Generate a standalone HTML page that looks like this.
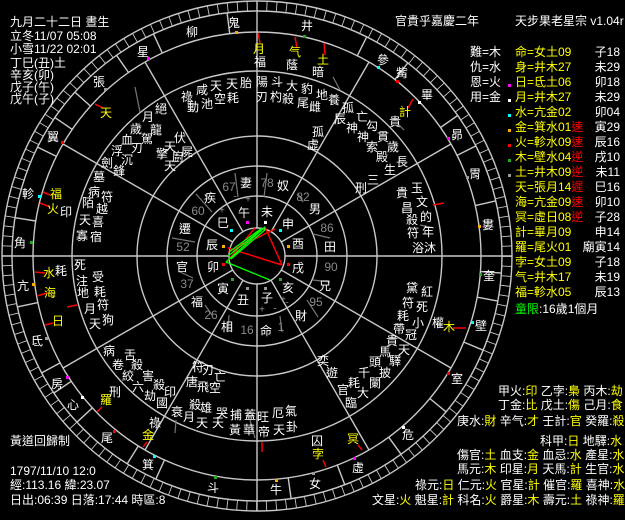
<!DOCTYPE html>
<html><head><meta charset="utf-8"><style>
html,body{margin:0;padding:0;background:#000;}
svg{display:block;font-family:"Liberation Sans","Noto Sans CJK TC","WenQuanYi Zen Hei",sans-serif;}
.c text{text-anchor:middle;dominant-baseline:central;font-size:12px;fill:#fff}
.c text.y{fill:#ff0}
.c text.g{fill:#8a8a8a;font-size:12px}
.t{font-size:12px;fill:#fff}
.y{fill:#ff0}.r{fill:#f00}.gr{fill:#0f0}
</style></head><body>
<svg width="625" height="520" viewBox="0 0 625 520" xmlns="http://www.w3.org/2000/svg">
<rect width="625" height="520" fill="#000"/>
<g fill="none" stroke="#c8c8c8" stroke-width="1.4">
<circle cx="257" cy="256" r="28"/><circle cx="257" cy="256" r="60"/><circle cx="257" cy="256" r="90"/>
<circle cx="257" cy="256" r="120"/><circle cx="257" cy="256" r="185"/><circle cx="257" cy="256" r="224"/>
<circle cx="257" cy="256" r="245"/><circle cx="257" cy="256" r="255"/>
<circle cx="257" cy="256" r="250" stroke-width="10" pathLength="160" stroke-dasharray="0.09 0.91"/>
<path d="M2 256H229M285 256H512M257 1V228M257 284V511
M281.2 242L451 144M271 231.8L369 62M243 231.8L145 62M232.8 242L63 144M232.8 270L63 368M243 280.2L145 450M271 280.2L369 450M281.2 270L451 368
M229.7 33.7L227.1 12.8M162.3 53L153.5 33.9M128.5 72.5L116.5 55.3M90.5 106.1L74.9 92.1M72.2 129.4L54.9 117.6M56.4 156.4L37.6 147.1M35.8 221L15 217.7M37.9 302.6L17.4 306.9M60.1 362.9L41.7 372.9M71.3 381.3L53.9 393M92.4 407.9L76.9 422.2M138.3 446L127.2 463.8M164.5 460L155.8 479.1M288.2 477.8L291.1 498.6M337.3 465.1L344.8 484.7M388.7 437.2L401 454.2M429.8 398.5L446 411.8M463.8 342.1L483.2 350.2M477.2 297.2L497.8 301.1M480.5 271.6L501.4 273.1M475.3 205.6L495.7 200.9M457.1 155.4L475.9 145.9M440.5 127.5L457.7 115.5M394.9 79.5L407.8 62.9M357.3 55.7L366.7 36.9"/>
</g>
<g stroke="#777" stroke-width="1.2">
<path d="M235 173L238 197M196 194L212 212M172 238L195 242M267 173L264 197M298 194L303 202M313 234L330 238M313 280L330 282M307 300L318 317M280 316L282 332M229 315L228 330M205 305L212 315M180 272L193 278M135 87L140 112M333 77L340 90M398 124L404 130M420 225L434 228M250 420L255 438M176 420L175 433"/>
</g>
<g stroke="#f00" stroke-width="1.5">
<path d="M95 104L103 108M43 192L50 195M40 203L50 207M295 37L297 48M324 43L325 55M258 33L260 43M413 99L408 108M433 205L444 203M453 328L466 328M358 445L362 450M323 460L326 467M262 442L262 452M35 272L45 273M37 296L47 293M45 325L53 323M67 307L77 305M97 412L102 407M143 447L147 442
M265 227L282 265M282 265L228 248M255 228L226 263M275 229L228 252"/>
</g>
<g stroke="#0f0" stroke-width="1.3">
<path d="M265 227L226 262M265 227L228 256M262 228L229 252M266 229L231 259M226 262L270 280"/>
</g>
<g>
<rect x="235" y="31" width="3" height="3" fill="#fa0"/><rect x="147" y="57" width="3" height="3" fill="#f0f"/><rect x="104" y="88" width="3" height="3" fill="#999"/><rect x="61" y="141" width="3" height="3" fill="#f00"/><rect x="38" y="195" width="3" height="3" fill="#0ff"/><rect x="30" y="241" width="3" height="3" fill="#2a2"/>
<rect x="303" y="35" width="3" height="3" fill="#2a2"/><rect x="377" y="66" width="3" height="3" fill="#0ff"/><rect x="396" y="80" width="3" height="3" fill="#f00"/><rect x="418" y="101" width="3" height="3" fill="#fff"/><rect x="447" y="137" width="3" height="3" fill="#f0f"/><rect x="466" y="176" width="3" height="3" fill="#999"/><rect x="478" y="225" width="3" height="3" fill="#fa0"/>
<rect x="479" y="273" width="3" height="3" fill="#2a2"/><rect x="471" y="321" width="3" height="3" fill="#0ff"/><rect x="447" y="372" width="3" height="3" fill="#f00"/><rect x="402" y="426" width="3" height="3" fill="#fff"/><rect x="353" y="457" width="3" height="3" fill="#f0f"/><rect x="312" y="472" width="3" height="3" fill="#999"/><rect x="275" y="479" width="3" height="3" fill="#fa0"/>
<rect x="32" y="283" width="3" height="3" fill="#fa0"/><rect x="45" y="337" width="3" height="3" fill="#999"/><rect x="66" y="376" width="3" height="3" fill="#f0f"/><rect x="81" y="396" width="3" height="3" fill="#fff"/><rect x="113" y="430" width="3" height="3" fill="#f00"/><rect x="153" y="455" width="3" height="3" fill="#0ff"/><rect x="214" y="476" width="3" height="3" fill="#2a2"/>
<rect x="264" y="221" width="3" height="3" fill="#fff"/><rect x="279" y="229" width="3" height="3" fill="#0ff"/><rect x="287" y="245" width="3" height="3" fill="#fa0"/><rect x="287" y="263" width="3" height="3" fill="#f00"/><rect x="279" y="278" width="3" height="3" fill="#2a2"/><rect x="264" y="287" width="3" height="3" fill="#999"/><rect x="246" y="287" width="3" height="3" fill="#999"/><rect x="231" y="278" width="3" height="3" fill="#2a2"/><rect x="222" y="263" width="3" height="3" fill="#f00"/><rect x="222" y="245" width="3" height="3" fill="#fa0"/><rect x="230" y="229" width="3" height="3" fill="#0ff"/><rect x="246" y="221" width="3" height="3" fill="#f0f"/>
</g>
<g class="c">
<!-- mansions -->
<text x="192" y="32">柳</text><text x="234" y="23">鬼</text><text x="143" y="52">星</text><text x="99" y="82">張</text><text x="53" y="137">翼</text><text x="28" y="194">軫</text><text x="20" y="243">角</text>
<text x="307" y="26">井</text><text x="383" y="60">參</text><text x="402" y="73">觜</text><text x="427" y="95">畢</text><text x="457" y="135">昴</text><text x="475" y="174">胃</text><text x="488" y="225">婁</text>
<text x="489" y="276">奎</text><text x="481" y="326">壁</text><text x="457" y="379">室</text><text x="408" y="435">危</text><text x="358" y="468">虛</text><text x="315" y="484">女</text><text x="276" y="490">牛</text>
<text x="23" y="286">亢</text><text x="37" y="341">氐</text><text x="57" y="384">房</text><text x="73" y="405">心</text><text x="107" y="438">尾</text><text x="148" y="465">箕</text><text x="213" y="488">斗</text>
<!-- planets -->
<text class="y" x="106" y="113">天</text><text class="y" x="56" y="194">福</text><text class="y" x="53" y="209">火</text><text x="66" y="212">印</text>
<text class="y" x="259" y="49">月</text><text x="260" y="62">福</text><text class="y" x="295" y="52">气</text><text class="y" x="323" y="60">土</text><text class="y" x="405" y="112">計</text>
<text x="438" y="323">權</text><text class="y" x="449" y="327">木</text><text class="y" x="353" y="439">冥</text><text x="317" y="441">囚</text><text class="y" x="318" y="454">孛</text>
<text class="y" x="49" y="273">水</text><text x="61" y="271">耗</text><text class="y" x="50" y="293">海</text><text class="y" x="58" y="321">日</text><text class="y" x="106" y="400">羅</text><text class="y" x="148" y="435">金</text>
<!-- stars top-left -->
<text x="161" y="109">絕</text><text x="148" y="117">月</text><text x="136" y="129">歲</text><text x="156" y="130">龍</text><text x="147" y="139">駕</text>
<text x="127" y="140">血</text><text x="137" y="148">刃</text><text x="117" y="151">浮</text><text x="127" y="160">沉</text><text x="107" y="163">劍</text><text x="119" y="171">鋒</text>
<text x="180" y="138">伏</text><text x="170" y="147">天</text><text x="187" y="152">屍</text><text x="162" y="154">擎</text><text x="178" y="157">廚</text><text x="170" y="166">天</text>
<text x="187" y="97">祿</text><text x="193" y="107">動</text><text x="202" y="90">咸</text><text x="207" y="104">池</text><text x="216" y="86">天</text><text x="220" y="99">空</text><text x="232" y="84">天</text><text x="233" y="98">耗</text><text x="246" y="83">胎</text>
<text x="99" y="177">墓</text><text x="94" y="192">病</text><text x="107" y="197">符</text><text x="88" y="203">陌</text><text x="102" y="209">越</text><text x="85" y="220">天</text><text x="98" y="222">喜</text><text x="82" y="236">寡</text><text x="96" y="237">宿</text>
<!-- stars top-right -->
<text x="292" y="65">蔭</text><text x="318" y="72">暗</text>
<text x="262" y="82">陽</text><text x="262" y="97">刃</text><text x="277" y="82">斗</text><text x="276" y="97">杓</text><text x="292" y="86">大</text><text x="288" y="99">殺</text><text x="307" y="89">豹</text><text x="303" y="103">尾</text><text x="322" y="95">地</text><text x="315" y="107">雌</text><text x="334" y="100">養</text>
<text x="348" y="108">孤</text><text x="340" y="119">辰</text><text x="362" y="117">亡</text><text x="352" y="128">神</text><text x="372" y="126">勾</text><text x="363" y="137">神</text><text x="383" y="137">貫</text><text x="372" y="147">索</text><text x="393" y="147">歲</text><text x="382" y="157">殿</text><text x="402" y="162">長</text><text x="390" y="170">生</text><text x="395" y="122">貴</text>
<text x="318" y="132">孤</text><text x="313" y="145">虛</text><text x="373" y="180">三</text><text x="361" y="188">刑</text>
<text x="402" y="193">貴</text><text x="417" y="188">玉</text><text x="407" y="208">昌</text><text x="422" y="202">文</text><text x="412" y="220">殺</text><text x="426" y="217">的</text><text x="413" y="233">符</text><text x="428" y="232">年</text><text x="418" y="248">浴</text><text x="430" y="248">沐</text>
<!-- stars bottom-right -->
<text x="412" y="288">黛</text><text x="427" y="292">紅</text><text x="408" y="303">符</text><text x="422" y="307">死</text><text x="403" y="316">耗</text><text x="418" y="323">小</text><text x="399" y="329">帶</text><text x="411" y="335">冠</text><text x="392" y="341">貴</text><text x="404" y="350">天</text><text x="385" y="352">馬</text><text x="395" y="361">驛</text><text x="375" y="362">頭</text><text x="385" y="373">披</text><text x="364" y="373">千</text><text x="375" y="383">闌</text><text x="354" y="383">耗</text><text x="363" y="393">大</text><text x="343" y="390">官</text><text x="351" y="403">臨</text><text x="323" y="361">奕</text><text x="332" y="373">遊</text>
<text x="263" y="417">旺</text><text x="264" y="432">帝</text><text x="278" y="413">厄</text><text x="279" y="430">天</text><text x="291" y="411">氣</text><text x="292" y="427">卦</text>
<!-- stars bottom-left -->
<text x="80" y="265">死</text><text x="82" y="281">注</text><text x="98" y="277">受</text><text x="83" y="293">地</text><text x="100" y="292">耗</text><text x="90" y="309">月</text><text x="103" y="305">符</text><text x="95" y="324">天</text><text x="108" y="320">狗</text>
<text x="109" y="351">病</text><text x="118" y="365">卷</text><text x="130" y="355">舌</text><text x="128" y="376">絞</text><text x="137" y="365">殺</text><text x="148" y="376">害</text><text x="138" y="387">六</text><text x="159" y="385">殺</text><text x="115" y="392">刑</text><text x="150" y="396">劫</text><text x="170" y="392">印</text><text x="162" y="403">國</text><text x="155" y="423">祿</text>
<text x="177" y="412">衰</text><text x="189" y="417">月</text><text x="195" y="405">殺</text><text x="202" y="423">天</text><text x="206" y="408">雄</text><text x="218" y="423">天</text><text x="222" y="413">哭</text><text x="235" y="430">黃</text><text x="236" y="415">捕</text><text x="249" y="430">華</text><text x="250" y="415">蓋</text>
<text x="198" y="367">符</text><text x="192" y="382">唐</text><text x="220" y="377">亡</text><text x="208" y="370">刃</text><text x="203" y="387">飛</text><text x="215" y="388">空</text>
<!-- inner palaces -->
<text x="246" y="183">妻</text><text class="g" x="229" y="187">67</text><text x="210" y="198">疾</text><text class="g" x="198" y="211">60</text><text x="244" y="213">午</text><text x="185" y="229">遷</text><text x="223" y="223">巳</text><text class="g" x="183" y="247">52</text><text x="212" y="245">辰</text>
<text class="g" x="267" y="183">78</text><text x="283" y="186">奴</text><text class="g" x="303" y="197">82</text><text x="315" y="209">男</text><text class="g" x="327" y="228">86</text><text x="330" y="247">田</text><text x="267" y="212">未</text><text x="288" y="224">申</text><text x="298" y="244">酉</text>
<text x="298" y="268">戌</text><text class="g" x="331" y="267">90</text><text x="325" y="286">兄</text><text x="288" y="288">亥</text><text x="267" y="298">子</text><text class="g" x="316" y="302">95</text><text x="301" y="316">財</text><text x="266" y="331">命</text><text class="g" x="281" y="327">1</text>
<text x="182" y="267">官</text><text x="213" y="267">卯</text><text class="g" x="187" y="284">37</text><text x="223" y="289">寅</text><text x="197" y="302">福</text><text class="g" x="211" y="315">26</text><text x="243" y="300">丑</text><text x="227" y="327">相</text><text class="g" x="247" y="330">16</text>
<text class="g" x="235" y="197" style="font-size:10px">-</text><text class="g" x="248" y="200" style="font-size:10px">+</text><text class="g" x="222" y="211" style="font-size:10px">+</text><text class="g" x="203" y="282" style="font-size:10px">-</text><text class="g" x="247" y="305" style="font-size:10px">-</text><text class="g" x="262" y="310" style="font-size:10px">+</text><text class="g" x="275" y="309" style="font-size:10px">-</text><text class="g" x="283" y="300" style="font-size:10px">+</text><text class="g" x="287" y="303" style="font-size:10px">-</text>
</g>
<!-- header left -->
<g class="t">
<text x="10" y="26">九月二十二日 晝生</text>
<text x="10" y="40">立冬11/07 05:08</text>
<text x="10" y="53">小雪11/22 02:01</text>
<text x="10" y="67">丁巳(丑)土</text>
<text x="10" y="79">辛亥(卯)</text>
<text x="10" y="91">戊子(午)</text>
<text x="10" y="103">戊午(子)</text>
<text x="395" y="25">官貴乎嘉慶二年</text>
<text x="515" y="25">天步果老星宗 v1.04r</text>
<text x="470" y="56">難=木</text><text x="470" y="71">仇=水</text><text x="470" y="86">恩=火</text><text x="470" y="101">用=金</text>
</g>
<g class="t">
<g class="y">
<text x="515" y="56">命=女土09</text><text x="515" y="71">身=井木27</text><text x="515" y="86">日=氐土06</text><text x="515" y="101">月=井木27</text><text x="515" y="116">水=亢金02</text>
<text x="515" y="131">金=箕水01<tspan class="r">速</tspan></text><text x="515" y="146">火=軫水09<tspan class="r">速</tspan></text><text x="515" y="161">木=壁水04<tspan class="r">逆</tspan></text><text x="515" y="176">土=井木09<tspan class="r">逆</tspan></text><text x="515" y="191">天=張月14<tspan class="r">遲</tspan></text><text x="515" y="206">海=亢金09<tspan class="r">速</tspan></text><text x="515" y="221">冥=虛日08<tspan class="r">逆</tspan></text>
<text x="515" y="236">計=畢月09</text><text x="515" y="251">羅=尾火01</text><text x="515" y="266">孛=女土09</text><text x="515" y="281">气=井木17</text><text x="515" y="296">福=軫水05</text>
</g>
<g text-anchor="end">
<text x="620" y="56">子18</text><text x="620" y="71">未29</text><text x="620" y="86">卯18</text><text x="620" y="101">未29</text><text x="620" y="116">卯04</text><text x="620" y="131">寅29</text><text x="620" y="146">辰16</text><text x="620" y="161">戌10</text><text x="620" y="176">未11</text><text x="620" y="191">巳16</text><text x="620" y="206">卯10</text><text x="620" y="221">子28</text><text x="620" y="236">申14</text><text x="620" y="251">廟寅14</text><text x="620" y="266">子18</text><text x="620" y="281">未19</text><text x="620" y="296">辰13</text>
</g>
<text x="515" y="313"><tspan class="gr">童限</tspan>:16歲1個月</text>
<rect x="508" y="84" width="3" height="3" fill="#f0f"/><rect x="508" y="99" width="3" height="3" fill="#fff"/><rect x="508" y="114" width="3" height="3" fill="#0ff"/><rect x="508" y="129" width="3" height="3" fill="#fa0"/><rect x="508" y="144" width="3" height="3" fill="#f00"/><rect x="508" y="159" width="3" height="3" fill="#2a2"/><rect x="508" y="174" width="3" height="3" fill="#999"/>
<!-- bottom right -->
<text x="498" y="395">甲火:<tspan class="y">印</tspan> 乙孛:<tspan class="y">梟</tspan> 丙木:<tspan class="y">劫</tspan></text>
<text x="498" y="409">丁金:<tspan class="y">比</tspan> 戊土:<tspan class="y">傷</tspan> 己月:<tspan class="y">食</tspan></text>
<text x="457" y="425">庚水:<tspan class="y">財</tspan> 辛气:<tspan class="y">才</tspan> 壬計:<tspan class="y">官</tspan> 癸羅:<tspan class="y">殺</tspan></text>
<text x="540" y="445">科甲:<tspan class="y">日</tspan> 地驛:<tspan class="y">水</tspan></text>
<text x="457" y="459">傷官:<tspan class="y">土</tspan> 血支:<tspan class="y">金</tspan> 血忌:<tspan class="y">水</tspan> 產星:<tspan class="y">水</tspan></text>
<text x="457" y="473">馬元:<tspan class="y">木</tspan> 印星:<tspan class="y">月</tspan> 天馬:<tspan class="y">計</tspan> 生官:<tspan class="y">水</tspan></text>
<text x="415" y="489">祿元:<tspan class="y">日</tspan> 仁元:<tspan class="y">火</tspan> 官星:<tspan class="y">計</tspan> 催官:<tspan class="y">羅</tspan> 喜神:<tspan class="y">水</tspan></text>
<text x="372" y="504">文星:<tspan class="y">火</tspan> 魁星:<tspan class="y">計</tspan> 科名:<tspan class="y">火</tspan> 爵星:<tspan class="y">木</tspan> 壽元:<tspan class="y">土</tspan> 祿神:<tspan class="y">羅</tspan></text>
<!-- bottom left -->
<text x="10" y="445">黃道回歸制</text>
<text x="10" y="475">1797/11/10 12:0</text>
<text x="10" y="489">經:113.16 緯:23.07</text>
<text x="10" y="504">日出:06:39 日落:17:44 時區:8</text>
</g>
</svg>
</body></html>
